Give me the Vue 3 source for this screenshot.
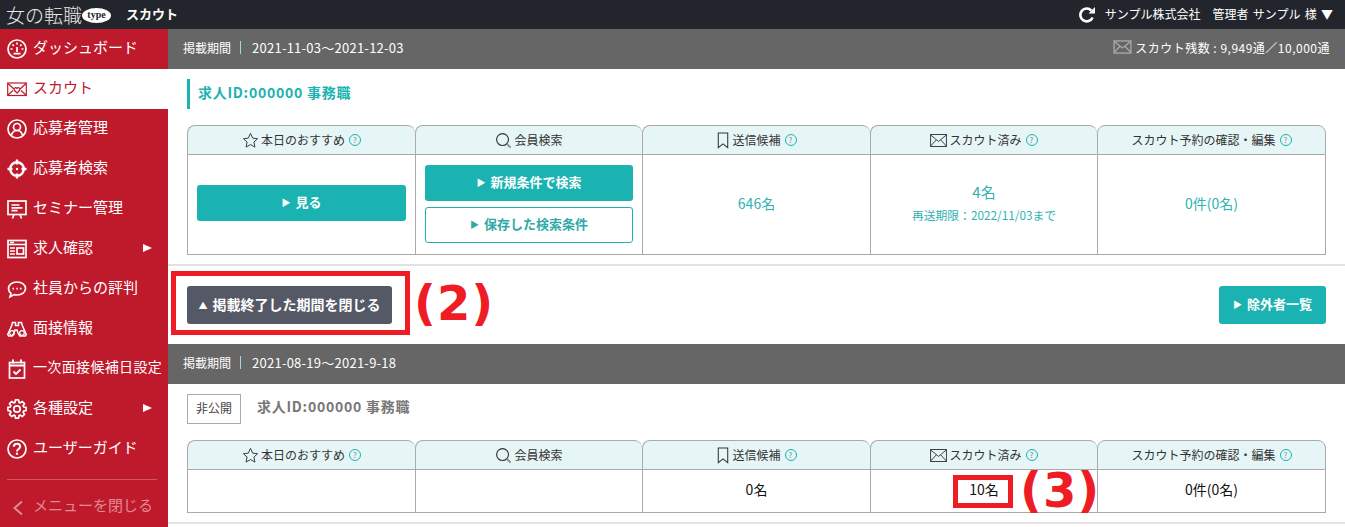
<script setup>
const menu = [
  { label: 'ダッシュボード', icon: 'gauge' },
  { label: 'スカウト', icon: 'mail', active: true },
  { label: '応募者管理', icon: 'user' },
  { label: '応募者検索', icon: 'target' },
  { label: 'セミナー管理', icon: 'board' },
  { label: '求人確認', icon: 'window', arrow: true },
  { label: '社員からの評判', icon: 'chat' },
  { label: '面接情報', icon: 'binoculars' },
  { label: '一次面接候補日設定', icon: 'calendar', tight: true },
  { label: '各種設定', icon: 'gear', arrow: true },
  { label: 'ユーザーガイド', icon: 'help' },
]

// gear outline, 8 teeth
const gearPoints = (() => {
  const pts = []
  for (let i = 0; i < 8; i++) {
    const a = (i * Math.PI) / 4
    const steps = [[-0.3, 6.9], [-0.17, 9.2], [0.17, 9.2], [0.3, 6.9]]
    steps.forEach(([d, r]) => {
      pts.push(`${(10 + r * Math.sin(a + d)).toFixed(2)},${(10 - r * Math.cos(a + d)).toFixed(2)}`)
    })
  }
  return pts.join(' ')
})()
</script>

<template>
  <div class="page">
    <header class="topbar">
      <div class="logo">
        <span class="logo-text">女の転職</span>
        <span class="logo-type">type</span>
      </div>
      <span class="top-title">スカウト</span>
      <div class="top-right">
        <svg class="reload" viewBox="0 0 18 18" width="18" height="18">
          <path d="M14.6 11.5A6.4 6.4 0 1 1 13.4 4.6" fill="none" stroke="#fff" stroke-width="2.6" />
          <path d="M10.6 7.4h6.4V1z" fill="#fff" />
        </svg>
        <span class="company">サンプル株式会社</span>
        <span class="account">管理者 サンプル 様 ▼</span>
      </div>
    </header>

    <div class="body">
      <nav class="sidebar">
        <a v-for="item in menu" :key="item.label" class="menu-item" :class="{ active: item.active }">
          <svg class="menu-icon" viewBox="0 0 20 20" width="20" height="20" fill="none" stroke="currentColor" stroke-width="1.7">
            <template v-if="item.icon === 'gauge'">
              <circle cx="10" cy="10" r="9" />
              <path d="M10 3.500v2M3.500 10h2M16.500 10h-2M5.500 5.500l1.300 1.300M14.500 5.500l-1.300 1.300M10 8v5M6.500 14.700h7" />
            </template>
            <template v-else-if="item.icon === 'mail'">
              <rect x="0.700" y="4" width="18.600" height="12.500" stroke-width="1.200" />
              <path d="M1 4.500l6.500 6M19 4.500l-6.500 6M1 16l5-4.500M19 16l-5-4.500M7 10c1-2 3-1.500 3 0 0-1.500 2-2 3 0 .3 1.500-2 3-3 4-1-1-3.300-2.500-3-4z" stroke-width="1.200" />
            </template>
            <template v-else-if="item.icon === 'user'">
              <circle cx="10" cy="10" r="9" />
              <circle cx="10" cy="8" r="3.500" />
              <path d="M4.500 16c1-3.500 3-4.500 5.500-4.500s4.500 1 5.500 4.500" />
            </template>
            <template v-else-if="item.icon === 'target'">
              <circle cx="10" cy="10" r="6.800" stroke-width="2.400" />
              <path d="M10 .5v5M10 14.500v5M.5 10h5M14.500 10h5" stroke-width="2.400" />
              <circle cx="10" cy="10" r="1.200" fill="currentColor" stroke="none" />
            </template>
            <template v-else-if="item.icon === 'board'">
              <rect x="1" y="2" width="18" height="13.500" />
              <path d="M4.500 6h8M4.500 8.800h11M4.500 11.600h6M7 15.500l-1.500 4M13 15.500l1.500 4" />
            </template>
            <template v-else-if="item.icon === 'window'">
              <rect x="1" y="1.500" width="18" height="17" />
              <path d="M1 5.500h18M3 3.500h4M3 9h5M3 12h5M3 15h5" />
              <rect x="10" y="9" width="6.500" height="6" />
            </template>
            <template v-else-if="item.icon === 'chat'">
              <path d="M10 3c5 0 8.500 2.800 8.500 6.500S15 16 10 16c-1 0-2-.1-2.800-.4L3 17.800l1-3.400C2.500 13.200 1.500 11.500 1.500 9.500 1.500 5.800 5 3 10 3z" />
              <path d="M5.500 9.700h1.500M9.300 9.700h1.500M13 9.700h1.500" stroke-width="1.800" />
            </template>
            <template v-else-if="item.icon === 'binoculars'">
              <path d="M5.500 3.500h3v3h3v-3h3l.8 3 4 9-1 1.500h-5.500l-2-3.500-.8-2.500h-2l-.8 2.500-2 3.500H1.700l-1-1.500 4-9z" stroke-width="1.500" />
              <circle cx="5" cy="14" r="2.300" stroke-width="1.200" />
              <circle cx="15" cy="14" r="2.300" stroke-width="1.200" />
            </template>
            <template v-else-if="item.icon === 'calendar'">
              <rect x="2.500" y="3.500" width="15" height="15.500" />
              <path d="M2.500 6.500h15M6 .5v4M14 .5v4" stroke-width="2" />
              <path d="M6.500 12.500l2.500 2.500 4.500-4.500" stroke-width="1.800" />
            </template>
            <template v-else-if="item.icon === 'gear'">
              <polygon :points="gearPoints" stroke-linejoin="round" />
              <circle cx="10" cy="10" r="3.200" />
            </template>
            <template v-else-if="item.icon === 'help'">
              <circle cx="10" cy="10" r="9" />
              <path d="M6.800 7.800C6.800 5.800 8.300 4.800 10 4.800s3.200 1 3.200 2.800c0 2.400-3.200 2.400-3.200 4.800" stroke-width="2" />
              <path d="M10 13.700v2" stroke-width="2.200" />
            </template>
          </svg>
          <span class="menu-label" :class="{ tight: item.tight }">{{ item.label }}</span>
          <span v-if="item.arrow" class="menu-arrow"></span>
        </a>
        <div class="menu-close">
          <svg viewBox="0 0 12 16" width="12" height="16" fill="none" stroke="currentColor" stroke-width="2">
            <path d="M10 1.500L2.500 8l7.500 6.500" />
          </svg>
          <span class="menu-label">メニューを閉じる</span>
        </div>
      </nav>

      <main class="main">
        <div class="period">
          <span>掲載期間</span><span class="period-sep"></span><span class="dates">2021-11-03～2021-12-03</span>
          <div class="remain">
            <svg viewBox="0 0 20 15" width="19" height="14" fill="none" stroke="#a6a6a6" stroke-width="1.500">
              <rect x="1" y="1" width="18" height="13" />
              <path d="M1 1.500l9 7 9-7M1 13.500l6.500-7M19 13.500l-6.500-7" />
            </svg>
            <span>スカウト残数 : 9,949通／10,000通</span>
          </div>
        </div>

        <section class="job">
          <h2 class="job-title">求人ID:000000 事務職</h2>
          <div class="stat-table">
            <div class="stat-head">
              <svg class="head-icon" viewBox="0 0 18 18" width="17" height="17"><path d="M9 1.500l2.300 5 5.200.6-3.900 3.500 1.100 5.400L9 13.300 4.300 16l1.100-5.400L1.500 7.100l5.200-.6z" fill="none" stroke="#333" /></svg>
              <span class="head-text">本日のおすすめ</span><span class="hint">?</span>
            </div>
            <div class="stat-head">
              <svg class="head-icon" viewBox="0 0 18 18" width="17" height="17"><circle cx="8" cy="8" r="6.300" fill="none" stroke="#333" stroke-width="1.200" /><path d="M12.500 12.500l4 4" stroke="#888" stroke-width="1.800" /></svg>
              <span class="head-text">会員検索</span>
            </div>
            <div class="stat-head">
              <svg class="head-icon" viewBox="0 0 14 18" width="14" height="17"><path d="M2 1h10v15.500l-5-4-5 4z" fill="none" stroke="#333" stroke-width="1.100" /></svg>
              <span class="head-text">送信候補</span><span class="hint">?</span>
            </div>
            <div class="stat-head">
              <svg class="head-icon" viewBox="0 0 18 14" width="17" height="13"><rect x=".5" y=".5" width="17" height="13" fill="none" stroke="#333" /><path d="M.5 1l8.500 7 8.500-7M.5 13l6-6.500M17.500 13l-6-6.500" fill="none" stroke="#333" /></svg>
              <span class="head-text">スカウト済み</span><span class="hint">?</span>
            </div>
            <div class="stat-head last"><span class="head-text">スカウト予約の確認・編集</span><span class="hint">?</span></div>

            <div class="stat-cell tall"><button class="btn solid wide">見る</button></div>
            <div class="stat-cell tall stack">
              <button class="btn solid wide">新規条件で検索</button>
              <button class="btn outline wide">保存した検索条件</button>
            </div>
            <div class="stat-cell tall teal">646名</div>
            <div class="stat-cell tall teal stack-text">
              <span class="count">4名</span>
              <span class="limit">再送期限：2022/11/03まで</span>
            </div>
            <div class="stat-cell tall teal last">0件(0名)</div>
          </div>
        </section>

        <div class="actions">
          <button class="btn dark">掲載終了した期間を閉じる</button>
          <button class="btn solid exclude">除外者一覧</button>
          <span class="mark mark-box"></span>
          <span class="mark-label label-two">(2)</span>
        </div>

        <div class="period">
          <span>掲載期間</span><span class="period-sep"></span><span class="dates">2021-08-19～2021-9-18</span>
        </div>

        <section class="job closed">
          <div class="closed-title">
            <span class="private">非公開</span>
            <span class="closed-name">求人ID:000000 事務職</span>
          </div>
          <div class="stat-table">
            <div class="stat-head">
              <svg class="head-icon" viewBox="0 0 18 18" width="17" height="17"><path d="M9 1.500l2.300 5 5.200.6-3.900 3.500 1.100 5.400L9 13.300 4.300 16l1.100-5.400L1.500 7.100l5.200-.6z" fill="none" stroke="#333" /></svg>
              <span class="head-text">本日のおすすめ</span><span class="hint">?</span>
            </div>
            <div class="stat-head">
              <svg class="head-icon" viewBox="0 0 18 18" width="17" height="17"><circle cx="8" cy="8" r="6.300" fill="none" stroke="#333" stroke-width="1.200" /><path d="M12.500 12.500l4 4" stroke="#888" stroke-width="1.800" /></svg>
              <span class="head-text">会員検索</span>
            </div>
            <div class="stat-head">
              <svg class="head-icon" viewBox="0 0 14 18" width="14" height="17"><path d="M2 1h10v15.500l-5-4-5 4z" fill="none" stroke="#333" stroke-width="1.100" /></svg>
              <span class="head-text">送信候補</span><span class="hint">?</span>
            </div>
            <div class="stat-head">
              <svg class="head-icon" viewBox="0 0 18 14" width="17" height="13"><rect x=".5" y=".5" width="17" height="13" fill="none" stroke="#333" /><path d="M.5 1l8.500 7 8.500-7M.5 13l6-6.500M17.500 13l-6-6.500" fill="none" stroke="#333" /></svg>
              <span class="head-text">スカウト済み</span><span class="hint">?</span>
            </div>
            <div class="stat-head last"><span class="head-text">スカウト予約の確認・編集</span><span class="hint">?</span></div>

            <div class="stat-cell short"></div>
            <div class="stat-cell short"></div>
            <div class="stat-cell short">0名</div>
            <div class="stat-cell short marked">
              10名
              <span class="mark mark-count"></span>
              <span class="mark-label label-three">(3)</span>
            </div>
            <div class="stat-cell short last">0件(0名)</div>
          </div>
        </section>
      </main>
    </div>
  </div>
</template>

<style>
html,
body {
  margin: 0;
  background: #fff;
  overflow: hidden;
}
</style>

<style scoped>
.page {
  width: 1345px;
  height: 527px;
  overflow: hidden;
  font-family: "Noto Sans CJK JP", "Noto Sans", sans-serif;
  color: #222;
  font-size: 13px;
}

.topbar {
  height: 29px;
  background: #22262c;
  color: #fff;
  display: flex;
  align-items: center;
  padding: 0 12px 0 6px;
  box-sizing: border-box;
}

.logo {
  display: flex;
  align-items: center;
  width: 120px;
}

.logo-text {
  font-size: 19px;
  font-weight: 300;
  line-height: 1;
  width: 76px;
  white-space: nowrap;
  color: #e8e8e8;
}

.logo-type {
  width: 29px;
  height: 15px;
  margin-top: 1px;
  border-radius: 50%;
  background: #fff;
  color: #22262c;
  font: bold 10px/14px "Liberation Serif", serif;
  text-align: center;
}

.top-title {
  font-size: 13px;
  font-weight: 700;
  padding-bottom: 3px;
}

.top-right {
  margin-left: auto;
  display: flex;
  align-items: center;
  font-size: 12px;
}

.reload {
  margin-right: 9px;
}

.company {
  margin-right: 12px;
  padding-bottom: 3px;
}

.account {
  padding-bottom: 3px;
  word-spacing: 1.600px;
}

.body {
  display: flex;
  height: 498px;
}

.sidebar {
  width: 168px;
  flex-shrink: 0;
  background: #bf1a2c;
  color: #fff;
  display: flex;
  flex-direction: column;
}

.menu-item {
  height: 40px;
  display: flex;
  align-items: center;
  padding: 0 0 0 7px;
  font-size: 15px;
  white-space: nowrap;
  position: relative;
}

.menu-item.active {
  background: #fff;
  color: #bf1a2c;
}

.menu-icon {
  margin-right: 6px;
  flex-shrink: 0;
}

.menu-label {
  padding-bottom: 6px;
}

.tight {
  font-size: 14px;
  letter-spacing: .35px;
}

.menu-arrow {
  position: absolute;
  left: 143px;
  top: 15px;
  border-left: 9px solid #fff;
  border-top: 4.500px solid transparent;
  border-bottom: 4.500px solid transparent;
}

.menu-close {
  margin: 10px 11px 0 7px;
  border-top: 1px solid #d25766;
  padding: 14px 0 0 5px;
  display: flex;
  align-items: center;
  gap: 9px;
  color: #df8a95;
  font-size: 15px;
  white-space: nowrap;
}

.main {
  flex: 1;
  min-width: 0;
}

.period {
  height: 40px;
  box-sizing: border-box;
  background: #666;
  color: #fff;
  display: flex;
  align-items: center;
  padding: 0 15px 4px;
  font-size: 12px;
}

.period-sep {
  width: 1px;
  height: 13px;
  background: #a5d5dc;
  margin: 0 11px 0 9px;
}

.dates {
  font-size: 13px;
  letter-spacing: .25px;
}

.remain {
  margin-left: auto;
  display: flex;
  align-items: center;
  gap: 3px;
  font-size: 12px;
  letter-spacing: .5px;
}

.job {
  padding: 10px 19px 9px 19px;
  border-bottom: 2px solid #e2e2e2;
}

.job-title {
  margin: 0 0 16px;
  height: 30px;
  border-left: 3px solid #1bb3b1;
  padding-left: 8px;
  font-size: 14px;
  letter-spacing: .75px;
  line-height: 26px;
  font-weight: 700;
  color: #1bb3b1;
}

.stat-table {
  display: grid;
  grid-template-columns: 228px 227px 228px 227px 229px;
}

.stat-head {
  height: 30px;
  box-sizing: border-box;
  background: #e6f6f6;
  border: 1px solid #aaa;
  border-right: 0;
  border-radius: 8px 8px 0 0;
  display: flex;
  align-items: center;
  justify-content: center;
  font-size: 12px;
  color: #333;
  white-space: nowrap;
}

.stat-head.last {
  border-right: 1px solid #aaa;
}

.head-icon {
  margin-right: 2px;
}

.head-text {
  padding-bottom: 2px;
}

.hint {
  width: 10px;
  height: 10px;
  margin-left: 4px;
  border: 1px solid #1bb3b1;
  border-radius: 50%;
  color: #888;
  font-size: 8px;
  line-height: 10px;
  text-align: center;
}

.stat-cell {
  box-sizing: border-box;
  border-left: 1px solid #aaa;
  border-bottom: 1px solid #aaa;
  display: flex;
  align-items: center;
  justify-content: center;
  font-size: 14px;
  padding: 0 9px 4px;
}

.stat-cell.last {
  border-right: 1px solid #aaa;
}

.tall {
  height: 100px;
}

.short {
  height: 43px;
  color: #111;
}

.teal {
  color: #2fb3b0;
}

.stack {
  flex-direction: column;
  gap: 6px;
  padding-bottom: 2px;
}

.stack-text {
  flex-direction: column;
  gap: 4px;
  padding-bottom: 6px;
}

.count {
  font-size: 15px;
}

.limit {
  font-size: 11.800px;
  white-space: nowrap;
}

.btn {
  font-family: inherit;
  height: 36px;
  border: 0;
  border-radius: 3px;
  font-size: 13px;
  font-weight: 700;
  color: #fff;
  padding: 0 0 3px;
  white-space: nowrap;
}

.btn::before {
  content: "▶";
  font-size: 9px;
  margin-right: 5px;
  vertical-align: 1px;
}

.wide {
  width: 100%;
}

.solid {
  background: #1bb3b1;
}

.outline {
  background: #fff;
  border: 1px solid #1bb3b1;
  color: #2fa9a7;
}

.dark {
  width: 205px;
  height: 38px;
  background: #545965;
  font-size: 14px;
}

.dark::before {
  content: "▲";
}

.exclude {
  width: 107px;
  height: 38px;
}

.actions {
  height: 78px;
  box-sizing: border-box;
  padding: 0 19px;
  display: flex;
  align-items: center;
  justify-content: space-between;
  position: relative;
}

.mark {
  position: absolute;
  box-sizing: border-box;
  border: 5px solid #ee1c25;
  pointer-events: none;
}

.mark-box {
  left: 3px;
  top: 5px;
  width: 239px;
  height: 64px;
}

.mark-label {
  position: absolute;
  color: #ee1c25;
  font-family: "DejaVu Sans", sans-serif;
  font-weight: 700;
  font-size: 48px;
  letter-spacing: 1px;
  line-height: 1;
  white-space: nowrap;
}

.label-two {
  left: 246px;
  top: 13px;
}

.closed {
  padding-top: 10px;
}

.closed-title {
  display: flex;
  align-items: flex-start;
  height: 30px;
  margin-bottom: 16px;
}

.private {
  width: 54px;
  height: 30px;
  box-sizing: border-box;
  border: 1px solid #aaa;
  font-size: 12px;
  line-height: 26px;
  text-align: center;
  color: #444;
}

.closed-name {
  margin-left: 16px;
  font-size: 14px;
  letter-spacing: .75px;
  font-weight: 700;
  line-height: 24px;
  color: #777;
}

.marked {
  position: relative;
}

.mark-count {
  left: 82px;
  top: 5px;
  width: 60px;
  height: 33px;
}

.label-three {
  left: 149px;
  top: -4px;
}
</style>
